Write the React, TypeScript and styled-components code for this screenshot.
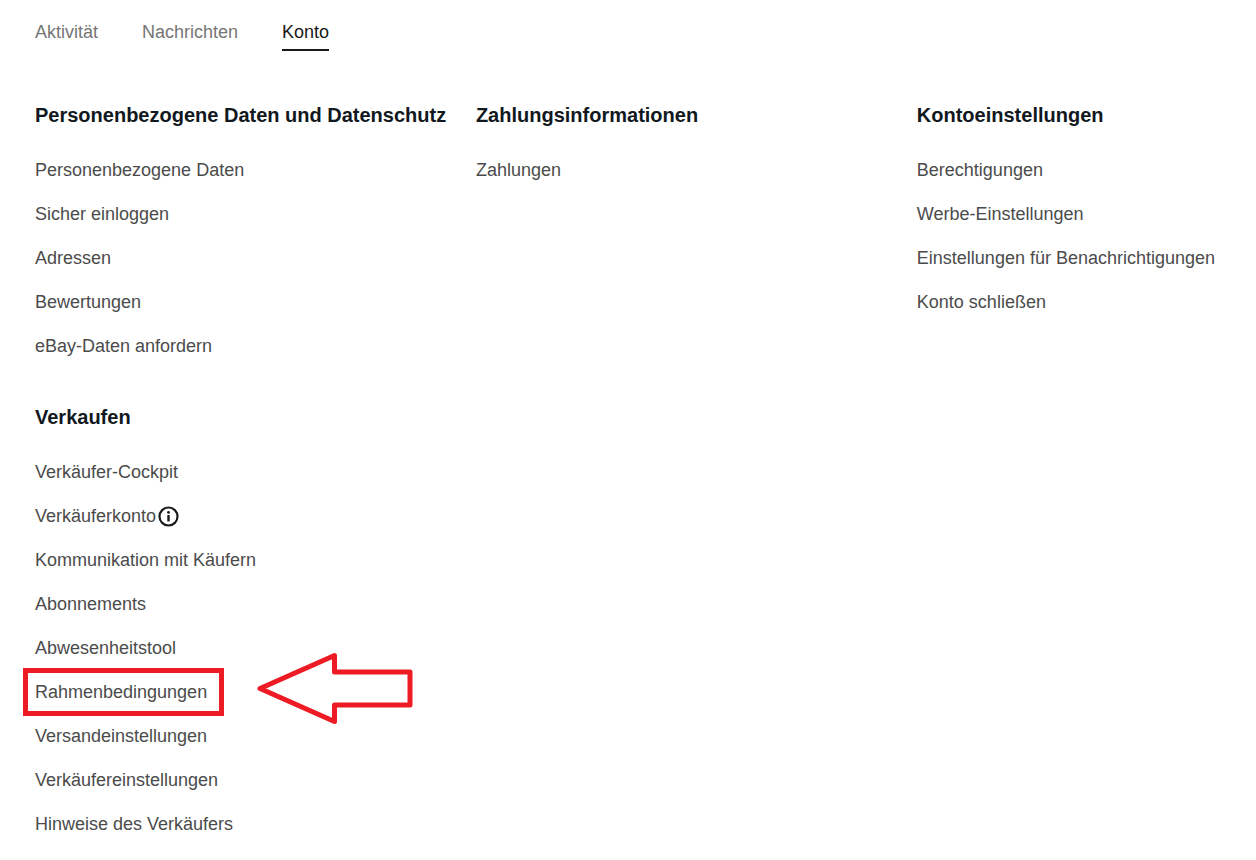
import React from "react";
import styled, { createGlobalStyle } from "styled-components";

const GlobalStyle = createGlobalStyle`
  *, *::before, *::after { box-sizing: border-box; }
  body {
    margin: 0;
    background: #ffffff;
    color: #111820;
    font-family: Arial, "Liberation Sans", sans-serif;
  }
`;

const Page = styled.div`
  padding: 20px 0 14px 35px;
`;

const Tabs = styled.nav`
  display: flex;
  gap: 44px;
  margin-bottom: 52px;
`;

const Tab = styled.a<{ $active?: boolean }>`
  padding-bottom: 5px;
  border-bottom: 2px solid ${(p) => (p.$active ? "#191919" : "transparent")};
  color: ${(p) => (p.$active ? "#191919" : "#767676")};
  font-size: 18px;
  line-height: 24px;
  text-decoration: none;
`;

const Columns = styled.main`
  display: grid;
  grid-template-columns: 13fr 13fr 10fr;
  row-gap: 37px;
`;

const Section = styled.section`
  min-width: 0;
`;

const SectionTitle = styled.h2`
  margin: 0 0 21px;
  font-size: 20px;
  line-height: 24px;
  font-weight: 700;
  white-space: nowrap;
`;

const LinkList = styled.ul`
  display: flex;
  flex-direction: column;
  align-items: flex-start;
  margin: 0;
  padding: 0;
  list-style: none;
`;

const LinkRow = styled.li`
  position: relative;
  display: flex;
  align-items: center;
  gap: 2px;
  height: 44px;
  white-space: nowrap;
`;

const AccountLink = styled.a`
  color: #4b4b4b;
  font-size: 18px;
  line-height: 24px;
  text-decoration: none;
`;

const InfoButton = styled.button`
  display: flex;
  padding: 0;
  border: 0;
  background: none;
  color: #191919;
`;

const Highlight = styled.span`
  position: absolute;
  inset: -2px -17px -2px -12px;
  border: 5px solid #ed1c24;
  pointer-events: none;
`;

const Arrow = styled.svg`
  position: absolute;
  top: -18px;
  left: 100%;
  margin-left: 49px;
  pointer-events: none;
`;

function InfoIcon() {
  return (
    <svg width="21" height="21" viewBox="0 0 21 21" fill="none" aria-hidden="true">
      <circle cx="10.5" cy="10.5" r="9" stroke="currentColor" strokeWidth="2.2" />
      <circle cx="10.5" cy="6.4" r="1.4" fill="currentColor" />
      <path d="M10.5 9v6.4" stroke="currentColor" strokeWidth="2.4" />
    </svg>
  );
}

function PointerArrow() {
  return (
    <Arrow width="158" height="74" viewBox="0 0 158 74" fill="none" aria-hidden="true">
      <path
        d="M4 36.5L78.5 3.5V20H154V53H78.5V69.5Z"
        stroke="#ed1c24"
        strokeWidth="5"
        strokeLinejoin="round"
      />
    </Arrow>
  );
}

type Entry = { label: string; info?: boolean; marked?: boolean };

const sections: { title: string; entries: Entry[] }[] = [
  {
    title: "Personenbezogene Daten und Datenschutz",
    entries: [
      { label: "Personenbezogene Daten" },
      { label: "Sicher einloggen" },
      { label: "Adressen" },
      { label: "Bewertungen" },
      { label: "eBay-Daten anfordern" },
    ],
  },
  { title: "Zahlungsinformationen", entries: [{ label: "Zahlungen" }] },
  {
    title: "Kontoeinstellungen",
    entries: [
      { label: "Berechtigungen" },
      { label: "Werbe-Einstellungen" },
      { label: "Einstellungen für Benachrichtigungen" },
      { label: "Konto schließen" },
    ],
  },
  {
    title: "Verkaufen",
    entries: [
      { label: "Verkäufer-Cockpit" },
      { label: "Verkäuferkonto", info: true },
      { label: "Kommunikation mit Käufern" },
      { label: "Abonnements" },
      { label: "Abwesenheitstool" },
      { label: "Rahmenbedingungen", marked: true },
      { label: "Versandeinstellungen" },
      { label: "Verkäufereinstellungen" },
      { label: "Hinweise des Verkäufers" },
    ],
  },
];

export default function App() {
  return (
    <>
      <GlobalStyle />
      <Page>
        <Tabs>
          <Tab href="#aktivitaet">Aktivität</Tab>
          <Tab href="#nachrichten">Nachrichten</Tab>
          <Tab href="#konto" $active aria-current="page">
            Konto
          </Tab>
        </Tabs>
        <Columns>
          {sections.map((section) => (
            <Section key={section.title}>
              <SectionTitle>{section.title}</SectionTitle>
              <LinkList>
                {section.entries.map((entry) => (
                  <LinkRow key={entry.label}>
                    <AccountLink href="#">{entry.label}</AccountLink>
                    {entry.info && (
                      <InfoButton type="button" aria-label="Info">
                        <InfoIcon />
                      </InfoButton>
                    )}
                    {entry.marked && (
                      <>
                        <Highlight />
                        <PointerArrow />
                      </>
                    )}
                  </LinkRow>
                ))}
              </LinkList>
            </Section>
          ))}
        </Columns>
      </Page>
    </>
  );
}
